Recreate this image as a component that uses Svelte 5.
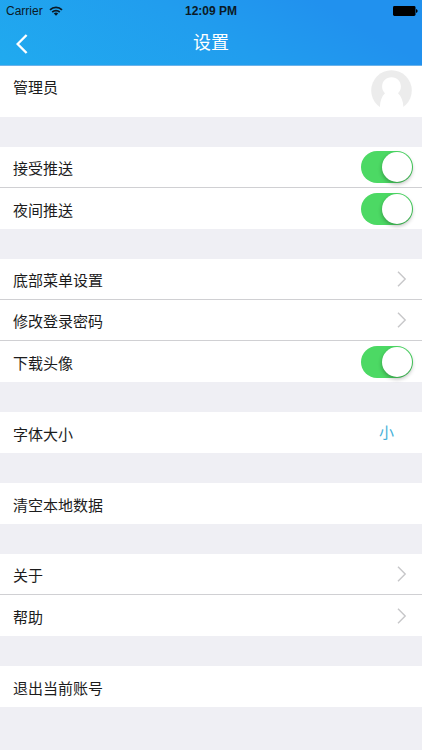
<script>
  let settings = $state({ push: true, night: true, avatar: true });

  const groups = [
    [
      { label: '接受推送', toggle: 'push' },
      { label: '夜间推送', toggle: 'night' }
    ],
    [
      { label: '底部菜单设置', href: '#menu' },
      { label: '修改登录密码', href: '#password' },
      { label: '下载头像', toggle: 'avatar' }
    ],
    [{ label: '字体大小', value: '小' }],
    [{ label: '清空本地数据' }],
    [
      { label: '关于', href: '#about' },
      { label: '帮助', href: '#help' }
    ],
    [{ label: '退出当前账号' }]
  ];
</script>

<div class="page">
  <header>
    <div class="status">
      <div class="carrier">
        <span>Carrier</span>
        <svg width="14" height="10" viewBox="0 0 14 10" aria-hidden="true">
          <g fill="none" stroke="#0b1a26" stroke-width="1.7">
            <path d="M1 3.9A8.4 8.4 0 0 1 13 3.9" />
            <path d="M3.2 6.1A5.4 5.4 0 0 1 10.8 6.1" />
          </g>
          <path d="M7 9.8 4.8 7.6A3.1 3.1 0 0 1 9.2 7.6Z" fill="#0b1a26" />
        </svg>
      </div>
      <span class="time">12:09 PM</span>
      <div class="battery">
        <svg width="25" height="10" viewBox="0 0 25 10" aria-hidden="true">
          <rect width="22.5" height="10" rx="1.4" />
          <path d="M23 3.3h.6q1 .4 1 1.7t-1 1.7H23Z" />
        </svg>
      </div>
    </div>
    <nav>
      <button class="back" aria-label="返回">
        <svg width="12" height="20" viewBox="0 0 12 20" aria-hidden="true">
          <path d="M10.6 1 1.6 10l9 9" fill="none" stroke="#fff" stroke-width="2.4" />
        </svg>
      </button>
      <h1>设置</h1>
    </nav>
  </header>

  <main>
    <a class="row profile" href="#profile">
      <span class="text">管理员</span>
      <svg width="41" height="41" viewBox="0 0 41 41" aria-hidden="true">
        <circle cx="20.5" cy="20.5" r="20.3" fill="#ececec" />
        <path
          d="M20.5 7.2c5.400 0 9.400 4 9.400 9.300 0 2.700-1.100 5-2.900 6.800 3.300 3 5 7.500 5.400 13.500V41H8.900v-4.200c.3-6 1.800-10.500 5.100-13.500-1.900-1.800-2.900-4.100-2.900-6.800 0-5.300 4-9.300 9.400-9.300Z"
          fill="#fff"
        />
      </svg>
    </a>

    {#each groups as group}
      <section>
        {#each group as item}
          {#if item.toggle}
            <label class="row">
              <span class="text">{item.label}</span>
              <input type="checkbox" role="switch" bind:checked={settings[item.toggle]} />
            </label>
          {:else if item.href}
            <a class="row" href={item.href}>
              <span class="text">{item.label}</span>
              <svg class="chevron" width="10" height="16" viewBox="0 0 10 16" aria-hidden="true">
                <path d="M1 .8 8.200 8 1 15.200" fill="none" stroke="#c7c7c9" stroke-width="1.4" />
              </svg>
            </a>
          {:else}
            <button class="row">
              <span class="text">{item.label}</span>
              {#if item.value}<span class="value">{item.value}</span>{/if}
            </button>
          {/if}
        {/each}
      </section>
    {/each}
  </main>
</div>

<style>
  :global(body) {
    background: #efeff4;
  }

  .page {
    font-family: 'Liberation Sans', 'Noto Sans CJK SC', sans-serif;
    color: #1c1c1c;
    padding-bottom: 30px;
  }

  header {
    box-sizing: border-box;
    height: 66px;
    background: linear-gradient(30deg, #20aaef, #219dee 50%, #2191ee 80%);
    border-bottom: 1px solid #6bb2ea;
  }

  .status {
    display: grid;
    grid-template-columns: 1fr auto 1fr;
    align-items: center;
    height: 22px;
    padding: 0 4px;
    font-size: 12px;
    color: #0b1a26;
  }

  .carrier {
    display: flex;
    align-items: center;
    gap: 6px;
    padding-left: 2px;
  }

  .time {
    font-weight: bold;
  }

  .battery {
    display: flex;
    justify-content: flex-end;
  }

  nav {
    display: grid;
    grid-template-columns: 44px 1fr 44px;
    align-items: center;
    height: 43px;
  }

  .back {
    display: flex;
    align-items: center;
    height: 43px;
    padding: 0 0 0 16px;
    border: 0;
    background: none;
  }

  h1 {
    margin: 0;
    font-size: 18px;
    font-weight: normal;
    line-height: 43px;
    text-align: center;
    color: #fff;
  }

  section {
    margin-top: 30px;
    background: #fff;
  }

  .row {
    display: flex;
    align-items: center;
    justify-content: space-between;
    box-sizing: border-box;
    width: 100%;
    height: 41px;
    padding: 0 9px 0 13px;
    border: 0;
    background: #fff;
    font: inherit;
    font-size: 15px;
    color: inherit;
    text-align: left;
    text-decoration: none;
  }

  .row:not(:last-child) {
    border-bottom: 1px solid #d0d0d3;
  }

  .text {
    padding-top: 4px;
    line-height: 24px;
  }

  .row.profile {
    align-items: flex-start;
    height: 51px;
    padding-top: 4px;
    padding-right: 10px;
    border-bottom: 0;
  }

  .profile .text {
    padding-top: 6px;
  }

  .chevron {
    margin-right: 6px;
  }

  .value {
    margin-right: 19px;
    line-height: 24px;
    color: #45b0d8;
  }

  input {
    appearance: none;
    box-sizing: border-box;
    width: 52px;
    height: 32px;
    margin: 0;
    padding: 1px;
    border-radius: 16px;
    background: #d8d8dc;
  }

  input::before {
    content: '';
    display: block;
    width: 30px;
    height: 30px;
    border-radius: 50%;
    background: #fff;
    box-shadow: 0 2px 4px rgba(0, 0, 0, 0.3);
  }

  input:checked {
    background: #4cd964;
  }

  input:checked::before {
    margin-left: 20px;
  }
</style>
